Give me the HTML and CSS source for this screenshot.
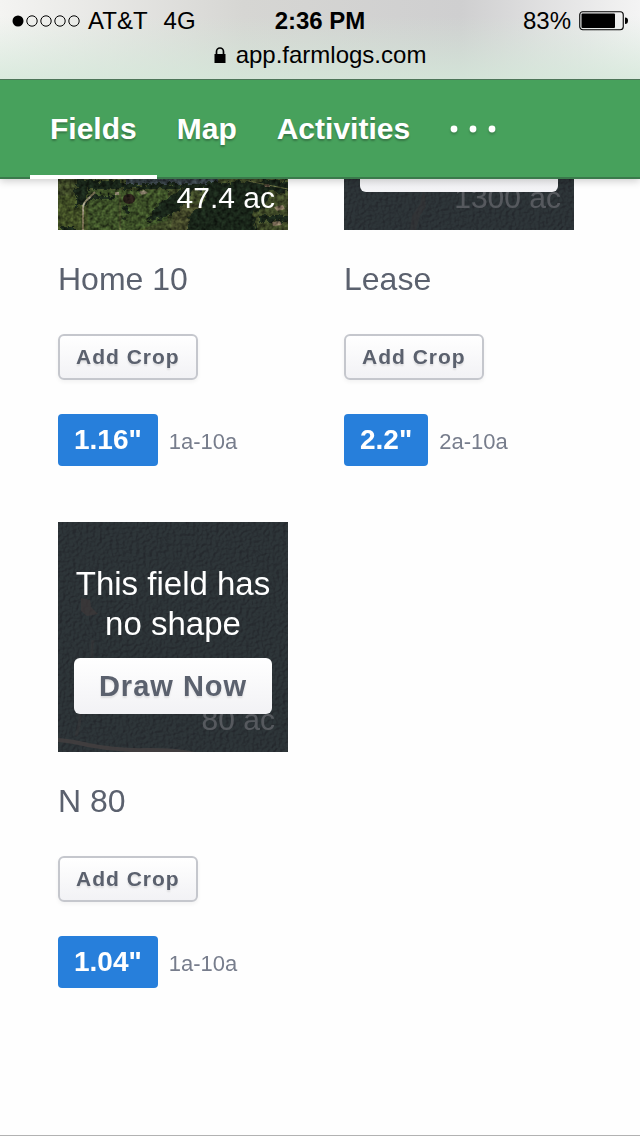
FILE: index.html
```html
<!DOCTYPE html>
<html lang="en">
<head>
    <meta charset="UTF-8">
    <meta name="viewport" content="width=device-width, initial-scale=1.0">
    <title>FarmLogs - Fields</title>
    <link rel="stylesheet" href="styles.css">
</head>
<body>
    <header class="top">
        <!-- Status bar -->
        <div class="browser-bar">
            <div class="status">
                <div class="status-left">
                    <svg class="signal" width="68" height="12" viewBox="0 0 68 12" aria-hidden="true">
                        <circle cx="6" cy="6" r="5.5"/>
                        <g fill="none" stroke="#000" stroke-width="1">
                            <circle cx="20" cy="6" r="5.2"/>
                            <circle cx="34" cy="6" r="5.2"/>
                            <circle cx="48" cy="6" r="5.2"/>
                            <circle cx="62" cy="6" r="5.2"/>
                        </g>
                    </svg>
                    <span>AT&amp;T</span>
                    <span class="network">4G</span>
                </div>
                <div class="status-time">2:36 PM</div>
                <div class="status-right">
                    <span>83%</span>
                    <svg width="49" height="20" viewBox="0 0 49 20" aria-hidden="true">
                        <rect x="0.75" y="0.75" width="43.5" height="18" rx="3" fill="none" stroke="#000" stroke-width="1.1"/>
                        <rect x="2.5" y="2.5" width="33.5" height="14.5" rx="1"/>
                        <path d="M46 6.5c2 0 3 1.2 3 3.2s-1 3.3-3 3.3z"/>
                    </svg>
                </div>
            </div>
            <div class="address">
                <svg width="12" height="17" viewBox="0 0 12 17" aria-hidden="true">
                    <rect x="0.5" y="7" width="11" height="9"/>
                    <path d="M2.5 8V4.7a3.5 3.7 0 0 1 7 0V8" fill="none" stroke="#000" stroke-width="1.7"/>
                </svg>
                <span>app.farmlogs.com</span>
            </div>
        </div>

        <!-- Main nav -->
        <nav class="nav">
            <a href="#fields" class="active">Fields</a>
            <a href="#map">Map</a>
            <a href="#activities">Activities</a>
            <button type="button" class="more" aria-label="More">
                <svg width="46" height="12" viewBox="0 0 46 12" fill="#fff" aria-hidden="true">
                    <circle cx="4" cy="6" r="3.4"/>
                    <circle cx="23" cy="6" r="3.4"/>
                    <circle cx="42" cy="6" r="3.4"/>
                </svg>
            </button>
        </nav>
    </header>

    <main class="fields">
        <article class="field">
            <div class="thumb">
                <svg viewBox="0 0 230 230" aria-hidden="true">
                    <defs>
                        <filter id="grain" x="0" y="0" width="100%" height="100%" color-interpolation-filters="sRGB">
                            <feTurbulence type="fractalNoise" baseFrequency="0.25" numOctaves="4" seed="4"/>
                            <feColorMatrix values="1 0 0 0 -0.1  1 0 0 0 -0.1  1 0 0 0 -0.1  0 0 0 0 1"/>
                        </filter>
                        <filter id="ragged" x="-10%" y="-10%" width="120%" height="120%">
                            <feTurbulence type="fractalNoise" baseFrequency="0.2" numOctaves="3" seed="9"/>
                            <feDisplacementMap in="SourceGraphic" scale="10" xChannelSelector="R" yChannelSelector="G"/>
                        </filter>
                    </defs>
                    <rect width="230" height="230" fill="#46522c"/>
                    <path d="M0 196l60-4 46 20-20 18H0z" fill="#485729"/>
                    <path d="M30 190h80v30l-30 10H30z" fill="#445a2c"/>
                    <path d="M118 204h30v26h-36z" fill="#4a4f2d"/>
                    <path d="M68 170h92v15H68z" fill="#3f4a50"/>
                    <!-- tree cover -->
                    <g fill="#1f2a1b" filter="url(#ragged)">
                        <path d="M18 170h10v36H18z"/>
                        <path d="M26 180h40v4h100v5H26zM32 195h22v4H30z"/>
                        <path d="M122 190l14-2-14 22-16 8-18 4 12-18z"/>
                        <path d="M150 182h60v20l-16 12 6 20h-72l4-20 14-12z"/>
                        <path d="M2 227h14v6H2zM206 180h28v12h-28zM202 216h30v5h-30z"/>
                        <circle cx="68" cy="210" r="3"/>
                        <circle cx="66" cy="218" r="2"/>
                    </g>
                    <path d="M25 230V208q0-5 5-9l7-7" fill="none" stroke="#98927a" stroke-width="2"/>
                    <path d="M62 194v36M190 181l40 8" stroke="#65693f" fill="none"/>
                    <ellipse cx="71" cy="199" rx="6" ry="5" fill="#281e19"/>
                    <path d="M81 192l5-2 4 3-6 2zM57 192h4v3h-4z" fill="#857c68"/>
                    <path d="M216 207l9-2 2 4-8 2zM214 222l8-1 2 4-9 1zM206 185l5-1 1 3h-5z" fill="#84755f"/>
                    <rect class="grain" width="230" height="230" filter="url(#grain)"/>
                </svg>
                <span class="acres">47.4 ac</span>
            </div>
            <h2>Home 10</h2>
            <button type="button" class="add-crop">Add Crop</button>
            <div class="rain"><strong>1.16"</strong><span>1a-10a</span></div>
        </article>

        <article class="field">
            <div class="thumb">
                <svg viewBox="0 0 230 230" aria-hidden="true">
                    <defs>
                        <filter id="bumps" x="0" y="0" width="100%" height="100%" color-interpolation-filters="sRGB">
                            <feTurbulence type="fractalNoise" baseFrequency="0.3" numOctaves="3" seed="2" result="n"/>
                            <feDiffuseLighting in="n" surfaceScale="3" diffuseConstant="1" lighting-color="#395149">
                                <feDistantLight azimuth="215" elevation="55"/>
                            </feDiffuseLighting>
                        </filter>
                    </defs>
                    <rect width="230" height="230" filter="url(#bumps)"/>
                    <path d="M80 186l-4 18-8 12-2 14h6l4-14 6-10z" fill="#6b4c3a" opacity="0.4"/>
                </svg>
                <span class="acres">1300 ac</span>
                <div class="no-shape">
                    <button type="button" class="draw-now">Draw Now</button>
                </div>
            </div>
            <h2>Lease</h2>
            <button type="button" class="add-crop">Add Crop</button>
            <div class="rain"><strong>2.2"</strong><span>2a-10a</span></div>
        </article>

        <article class="field">
            <div class="thumb">
                <svg viewBox="0 0 230 230" aria-hidden="true">
                    <rect width="230" height="230" filter="url(#bumps)"/>
                    <path d="M23 76l9 2 1 7 7 7-11 2-6-5z" fill="#94604a" opacity="0.6"/>
                    <path d="M35 118q-2 12 0 24M22 192q0 12-4 22" fill="none" stroke="#7a5f4d" stroke-width="3" opacity="0.4"/>
                    <path d="M0 218q14 1 30 5 30 6 60 5 30 0 46 4" fill="none" stroke="#9a7a66" stroke-width="4" opacity="0.9"/>
                </svg>
                <span class="acres">80 ac</span>
                <div class="no-shape">
                    <p>This field has no shape</p>
                    <button type="button" class="draw-now">Draw Now</button>
                </div>
            </div>
            <h2>N 80</h2>
            <button type="button" class="add-crop">Add Crop</button>
            <div class="rain"><strong>1.04"</strong><span>1a-10a</span></div>
        </article>
    </main>
</body>
</html>
```

FILE: styles.css
```css
/* General Styling */
* {
    box-sizing: border-box;
}

body {
    font-family: "Helvetica Neue", "Liberation Sans", Arial, sans-serif;
    margin: 0;
    background-color: #fefefe;
    color: #5b616e;
}

button {
    font-family: inherit;
    cursor: pointer;
}

/* Header stays put while the fields scroll under it */
.top {
    position: fixed;
    top: 0;
    left: 0;
    right: 0;
    z-index: 10;
    box-shadow: 0 2px 8px rgba(0, 0, 0, 0.2);
}

.browser-bar {
    height: 80px;
    color: #000;
    font-size: 24px;
    line-height: 28px;
    border-bottom: 1px solid #4d7558;
    background:
        linear-gradient(rgba(212, 232, 217, 0) 20%, rgba(212, 232, 217, 0.8)),
        linear-gradient(90deg, #f4f4f2, #d6d6d3 38%, #cfcfd0 72%, #f4f4f4);
}

.status {
    display: flex;
    align-items: center;
    padding: 7px 12px 0;
}

.status-left, .status-right {
    flex: 1;
    display: flex;
    align-items: center;
    gap: 8px;
}

.status-right {
    justify-content: flex-end;
}

.network {
    margin-left: 8px;
}

.status-time {
    font-weight: bold;
}

.address {
    display: flex;
    justify-content: center;
    align-items: center;
    gap: 10px;
    padding-top: 6px;
}

/* Nav */
.nav {
    display: flex;
    height: 99px;
    padding-left: 30px;
    background-color: #47a15c;
    border-bottom: 2px solid #3a7a4b;
}

.nav a, .more {
    display: flex;
    align-items: center;
    height: 99px;
    padding: 2px 20px 0;
    border: none;
    border-bottom: 4px solid transparent;
    background: none;
    color: #fff;
    font-size: 30px;
    font-weight: bold;
    text-decoration: none;
    text-shadow: 0 2px 2px rgba(0, 0, 0, 0.25);
}

.nav a.active {
    border-bottom-color: #fff;
}

.more svg {
    filter: drop-shadow(0 2px 1px rgba(0, 0, 0, 0.2));
}

/* Fields */
.fields {
    display: grid;
    grid-template-columns: repeat(auto-fill, 230px);
    align-content: start;
    gap: 56px;
    min-height: 100vh;
    padding: 0 58px;
    border-bottom: 1px solid #b2b2b2;
}

.thumb {
    position: relative;
    height: 230px;
    overflow: hidden;
    color: #fff;
}

.thumb svg {
    display: block;
    width: 100%;
    height: 100%;
}

.grain {
    opacity: 0.7;
    mix-blend-mode: overlay;
}

.acres {
    position: absolute;
    right: 13px;
    bottom: 12px;
    font-size: 30px;
    line-height: 40px;
}

/* Dimmed cover for fields that were never drawn */
.no-shape {
    position: absolute;
    inset: 0;
    display: flex;
    flex-direction: column;
    justify-content: flex-end;
    padding: 0 16px 38px;
    background-color: rgba(44, 47, 54, 0.8);
    text-align: center;
}

.no-shape p {
    margin: 0 0 14px;
    font-size: 33px;
    line-height: 40px;
}

.draw-now, .add-crop {
    display: block;
    background: linear-gradient(#fff, #f2f2f5);
    color: #5b616e;
    font-weight: bold;
    letter-spacing: 1px;
    text-shadow: 0 2px 2px rgba(0, 0, 0, 0.1);
}

.draw-now {
    width: 100%;
    height: 56px;
    padding: 0;
    border: none;
    border-radius: 6px;
    font-size: 29px;
}

.add-crop {
    height: 46px;
    padding: 0 16px;
    border: 2px solid #c5c7cd;
    border-radius: 6px;
    font-size: 21px;
    box-shadow: 0 2px 4px rgba(0, 0, 0, 0.05);
}

.field h2 {
    margin: 29px 0 35px;
    font-size: 32px;
    font-weight: normal;
    line-height: 40px;
}

.rain {
    display: flex;
    align-items: baseline;
    gap: 11px;
    margin-top: 34px;
    color: #777d8c;
    font-size: 22px;
}

.rain strong {
    padding: 0 16px;
    border-radius: 4px;
    background-color: #277fdb;
    color: #fff;
    font-size: 28px;
    line-height: 52px;
}
```
